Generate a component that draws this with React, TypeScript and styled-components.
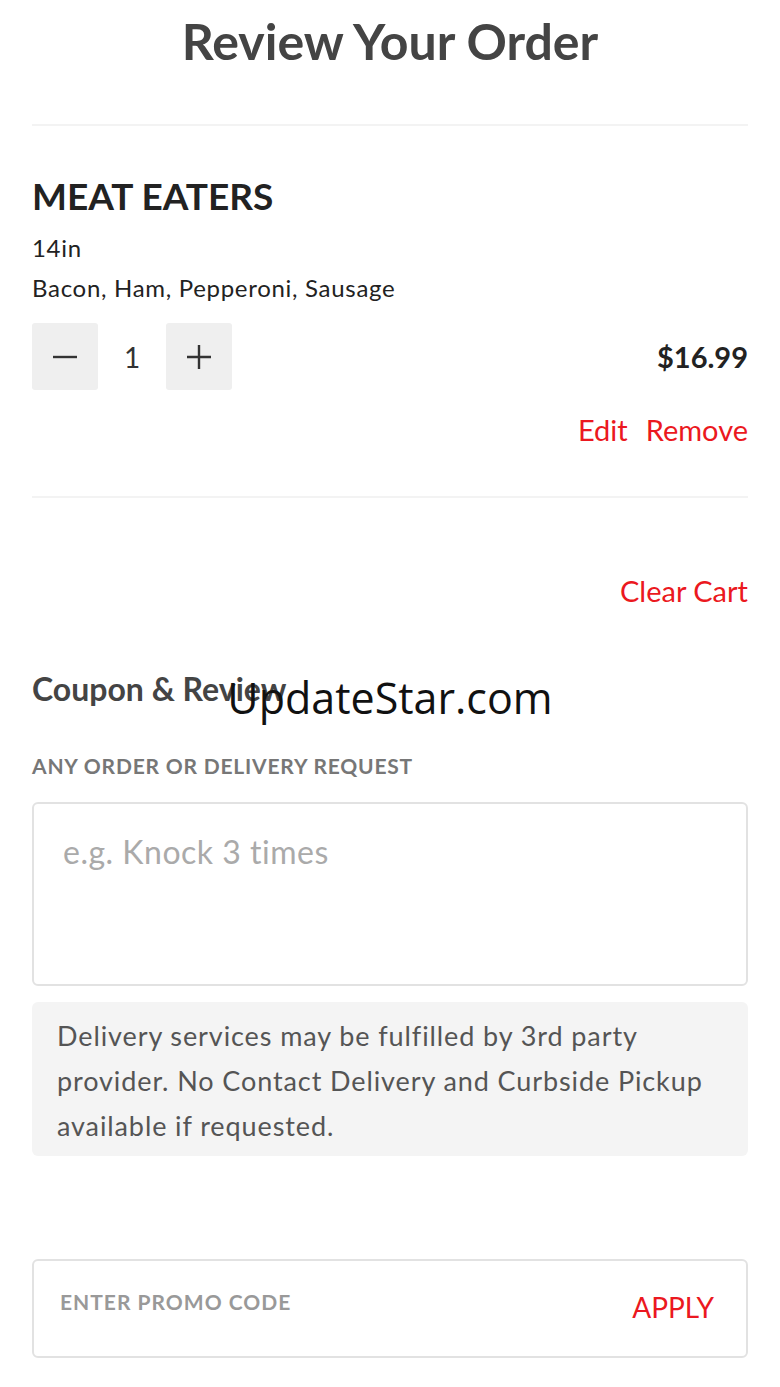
import React from "react";
import styled, { createGlobalStyle } from "styled-components";

const GlobalStyle = createGlobalStyle`
  html, body {
    margin: 0;
    padding: 0;
    background: #ffffff;
  }
  body {
    font-family: Lato, "Liberation Sans", sans-serif;
    color: #222;
  }
`;

const Page = styled.div`
  position: relative;
  width: 780px;
  min-height: 1387px;
  padding: 0 32px;
  box-sizing: border-box;
  overflow: hidden;
`;

const Title = styled.h1`
  margin: 0;
  padding-top: 13px;
  height: 124px;
  box-sizing: border-box;
  text-align: center;
  font-size: 50px;
  font-weight: 700;
  color: #444;
  line-height: 56px;
`;

const Divider = styled.div`
  height: 2px;
  background: #f3f3f3;
`;

const Item = styled.section`
  padding-top: 47px;
  padding-bottom: 50px;
`;

const ItemName = styled.h2`
  margin: 0 0 9px;
  font-size: 37px;
  font-weight: 700;
  color: #222;
  line-height: 46px;
`;

const ItemLine = styled.div`
  font-size: 24px;
  letter-spacing: 0.7px;
  line-height: 40px;
  color: #222;
`;

const QtyRow = styled.div`
  display: flex;
  align-items: center;
  margin-top: 15px;
`;

const QtyButton = styled.button`
  width: 66px;
  height: 67px;
  border: none;
  border-radius: 3px;
  background: #efefef;
  display: flex;
  align-items: center;
  justify-content: center;
  padding: 0;
`;

const QtyValue = styled.span`
  width: 68px;
  text-align: center;
  font-size: 28px;
  color: #333;
`;

const Price = styled.span`
  margin-left: auto;
  font-size: 29px;
  font-weight: 700;
  color: #222;
`;

const ActionRow = styled.div`
  display: flex;
  justify-content: flex-end;
  gap: 18px;
  margin-top: 24px;
`;

const RedLink = styled.span<{ $size?: number }>`
  color: #eb1820;
  font-size: ${(p) => p.$size || 29}px;
  line-height: 32px;
`;

const ClearRow = styled.div`
  display: flex;
  justify-content: flex-end;
  padding-top: 77px;
`;

const SectionTitle = styled.h3`
  margin: 64px 0 0;
  font-size: 32px;
  font-weight: 700;
  color: #444;
  line-height: 36px;
`;

const FieldLabel = styled.div`
  margin-top: 46px;
  font-size: 21px;
  font-weight: 700;
  color: #777;
  letter-spacing: 0.8px;
`;

const TextBox = styled.div`
  margin-top: 24px;
  height: 184px;
  border: 2px solid #e2e2e2;
  border-radius: 6px;
  box-sizing: border-box;
  padding: 28px 29px;
  font-size: 32px;
  letter-spacing: 0.5px;
  color: #aaa;
`;

const InfoBox = styled.div`
  margin-top: 16px;
  background: #f4f4f4;
  border-radius: 6px;
  padding: 11px 25px 8px;
  font-size: 27px;
  letter-spacing: 0.9px;
  line-height: 45px;
  color: #555;
`;

const PromoBox = styled.div`
  margin-top: 103px;
  height: 99px;
  border: 2px solid #e2e2e2;
  border-radius: 6px;
  box-sizing: border-box;
  display: flex;
  justify-content: space-between;
  align-items: flex-start;
  padding: 28px 32px 0 26px;
`;

const PromoPlaceholder = styled.span`
  font-size: 21px;
  font-weight: 700;
  letter-spacing: 1px;
  color: #999;
`;

const ApplyWrap = styled.div`
  margin-top: 2px;
`;

const Watermark = styled.div`
  position: absolute;
  top: 668px;
  left: 0;
  right: 0;
  text-align: center;
  font-family: "Open Sans", "Noto Sans", sans-serif;
  font-size: 43px;
  color: #111;
  pointer-events: none;
`;

const Minus = () => (
  <svg width="28" height="28" viewBox="0 0 28 28">
    <path d="M2 14h24" stroke="#333" strokeWidth="2.4" />
  </svg>
);

const Plus = () => (
  <svg width="28" height="28" viewBox="0 0 28 28">
    <path d="M2 14h24M14 2v24" stroke="#333" strokeWidth="2.4" />
  </svg>
);

const App = () => {
  return (
    <Page>
      <GlobalStyle />
      <Title>Review Your Order</Title>
      <Divider />
      <Item>
        <ItemName>MEAT EATERS</ItemName>
        <ItemLine>14in</ItemLine>
        <ItemLine>Bacon, Ham, Pepperoni, Sausage</ItemLine>
        <QtyRow>
          <QtyButton>
            <Minus />
          </QtyButton>
          <QtyValue>1</QtyValue>
          <QtyButton>
            <Plus />
          </QtyButton>
          <Price>$16.99</Price>
        </QtyRow>
        <ActionRow>
          <RedLink>Edit</RedLink>
          <RedLink>Remove</RedLink>
        </ActionRow>
      </Item>
      <Divider />
      <ClearRow>
        <RedLink>Clear Cart</RedLink>
      </ClearRow>
      <SectionTitle>Coupon &amp; Review</SectionTitle>
      <FieldLabel>ANY ORDER OR DELIVERY REQUEST</FieldLabel>
      <TextBox>e.g. Knock 3 times</TextBox>
      <InfoBox>
        Delivery services may be fulfilled by 3rd party
        <br />
        provider. No Contact Delivery and Curbside Pickup
        <br />
        available if requested.
      </InfoBox>
      <PromoBox>
        <PromoPlaceholder>ENTER PROMO CODE</PromoPlaceholder>
        <ApplyWrap>
          <RedLink $size={28}>APPLY</RedLink>
        </ApplyWrap>
      </PromoBox>
      <Watermark>UpdateStar.com</Watermark>
    </Page>
  );
};

export default App;
